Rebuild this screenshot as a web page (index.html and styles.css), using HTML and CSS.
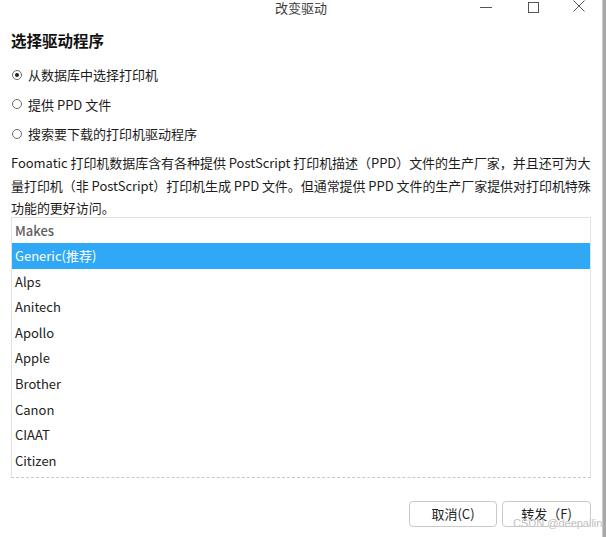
FILE: index.html
```html
<!DOCTYPE html>
<html lang="zh-CN">
<head>
<meta charset="utf-8">
<link rel="stylesheet" href="styles.css">
</head>
<body>
<div class="screen">
  <div class="dialog">
    <div class="titlebar">
      <div class="title">改变驱动</div>
      <div class="controls">
        <svg class="ctl ctl-min" width="14" height="14" viewBox="0 0 14 14"><path d="M1 7.5H13" stroke="#555" stroke-width="1" fill="none"/></svg>
        <svg class="ctl ctl-max" width="14" height="14" viewBox="0 0 14 14"><rect x="2.5" y="2.5" width="10" height="10" stroke="#555" stroke-width="1" fill="none"/></svg>
        <svg class="ctl ctl-close" width="14" height="14" viewBox="0 0 14 14"><path d="M1.5 1.5L12.5 12.5M12.5 1.5L1.5 12.5" stroke="#555" stroke-width="1" fill="none"/></svg>
      </div>
    </div>
    <div class="content">
      <h1 class="heading">选择驱动程序</h1>
      <div class="options">
        <label class="radio"><span class="dot checked"></span>从数据库中选择打印机</label>
        <label class="radio"><span class="dot"></span>提供 PPD 文件</label>
        <label class="radio"><span class="dot"></span>搜索要下载的打印机驱动程序</label>
      </div>
      <p class="desc">Foomatic 打印机数据库含有各种提供 PostScript 打印机描述（PPD）文件的生产厂家，并且还可为大量打印机（非 PostScript）打印机生成 PPD 文件。但通常提供 PPD 文件的生产厂家提供对打印机特殊功能的更好访问。</p>
      <div class="list">
        <div class="list-head">Makes</div>
        <div class="row selected">Generic(推荐)</div>
        <div class="row">Alps</div>
        <div class="row">Anitech</div>
        <div class="row">Apollo</div>
        <div class="row">Apple</div>
        <div class="row">Brother</div>
        <div class="row">Canon</div>
        <div class="row">CIAAT</div>
        <div class="row">Citizen</div>
      </div>
      <div class="buttons">
        <button class="btn">取消(C)</button>
        <button class="btn">转发（F)</button>
      </div>
    </div>
    <div class="watermark">CSDN @deepallin</div>
  </div>
  <div class="strip"></div>
</div>
</body>
</html>
```
FILE: styles.css
```css
* { box-sizing: border-box; }
html, body {
  margin: 0;
  padding: 0;
  width: 606px;
  height: 537px;
  overflow: hidden;
  font-family: "Noto Sans CJK SC", "Noto Sans", sans-serif;
  color: #222;
}
.screen {
  display: flex;
  width: 606px;
  height: 537px;
}
.dialog {
  position: relative;
  width: 602px;
  height: 537px;
  background: #fff;
  display: flex;
  flex-direction: column;
}
.strip {
  flex: 1;
  background: #a9a9a9;
  border-left: 1px solid #c8c8c8;
}
.titlebar {
  position: relative;
  height: 17px;
}
.title {
  text-align: center;
  font-size: 13px;
  line-height: 16px;
  color: #3c3c3c;
}
.controls {
  position: absolute;
  top: 0;
  right: 0;
  display: flex;
}
.ctl { display: block; }
.ctl-min { margin-right: 33px; }
.ctl-max { margin-right: 32px; }
.ctl-close { margin-right: 16px; margin-top: -1px; }
.content {
  padding: 0 11px;
  display: flex;
  flex-direction: column;
}
.heading {
  margin: 11px 0 0 0;
  font-size: 15.5px;
  line-height: 24px;
  font-weight: bold;
  color: #111;
}
.options {
  margin-top: 13px;
  display: flex;
  flex-direction: column;
  gap: 10.5px;
}
.radio {
  display: flex;
  align-items: center;
  font-size: 13px;
  line-height: 19px;
  color: #1c1c1c;
}
.dot {
  width: 10px;
  height: 10px;
  border: 1px solid #6a6a6a;
  border-radius: 50%;
  margin: 0 6px 0 1px;
  position: relative;
  flex: none;
}
.dot.checked::after {
  content: "";
  position: absolute;
  left: 2px;
  top: 2px;
  width: 4px;
  height: 4px;
  border-radius: 50%;
  background: #222;
}
.desc {
  margin: 9px -4px 0 0;
  font-size: 13px;
  letter-spacing: -0.05px;
  line-height: 22.5px;
  color: #1c1c1c;
}
.list {
  margin-top: -3px;
  width: 580px;
  height: 261px;
  border: 1px solid #e2e2e2;
  border-bottom: 1px dashed #c8c8c8;
  overflow: hidden;
}
.list-head {
  height: 25.5px;
  line-height: 25px;
  padding-left: 3px;
  font-size: 13px;
  font-weight: 500;
  color: #5f5f5f;
}
.row {
  height: 25.6px;
  line-height: 25.6px;
  padding-left: 3px;
  font-size: 13px;
  color: #222;
}
.row.selected {
  background: #2fa9f6;
  color: #fff;
}
.buttons {
  margin-top: 23px;
  display: flex;
  justify-content: flex-end;
  gap: 5px;
  width: 580px;
}
.btn {
  font-family: "Noto Sans CJK SC", "Noto Sans", sans-serif;
  font-size: 13px;
  color: #222;
  height: 26px;
  width: 88px;
  background: #fff;
  border: 1px solid #c9c9c9;
  border-radius: 4px;
  padding: 0;
}
.btn + .btn { width: 89px; }
.watermark {
  position: absolute;
  left: 513px;
  top: 517px;
  font-family: "Liberation Sans", sans-serif;
  font-size: 11px;
  color: #c0c0c0;
  text-shadow: 0 0 1px #fff;
  white-space: nowrap;
}
```
